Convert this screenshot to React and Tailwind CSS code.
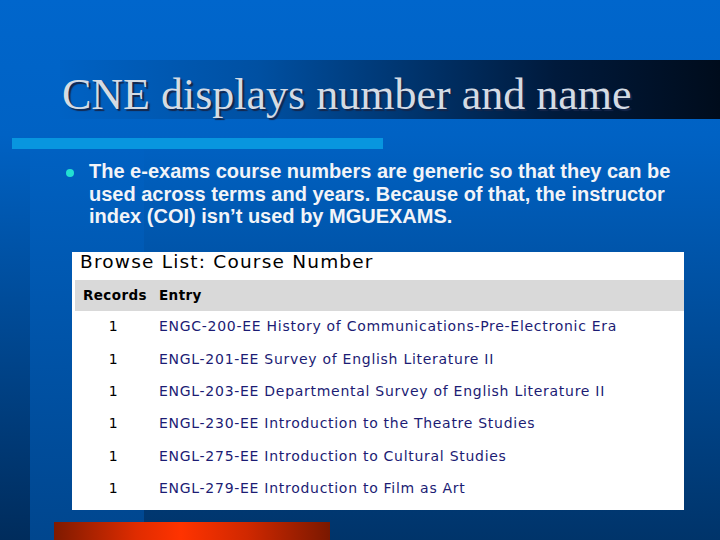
// Slide: CNE displays number and name — blue PowerPoint-style slide with a browse list panel
const rows = [
  'ENGC-200-EE History of Communications-Pre-Electronic Era',
  'ENGL-201-EE Survey of English Literature II',
  'ENGL-203-EE Departmental Survey of English Literature II',
  'ENGL-230-EE Introduction to the Theatre Studies',
  'ENGL-275-EE Introduction to Cultural Studies',
  'ENGL-279-EE Introduction to Film as Art',
];

function Backdrop() {
  return (
    <div className="col-start-1 row-start-1 flex h-[540px]">
      <div className="w-[30px] bg-[linear-gradient(to_bottom,#0066cc_0%,#0062c4_25%,#002c5c_100%)]" />
      <div className="w-[114px] bg-[linear-gradient(to_bottom,#0066cc_0%,#0062c4_25%,#00468e_100%)]" />
      <div className="flex-1 bg-[linear-gradient(to_bottom,#0066cc_0%,#0062c4_25%,#00346a_100%)]" />
    </div>
  );
}

function BrowseList() {
  return (
    <div className="ml-[72px] mt-[24px] w-[612px] h-[258px] bg-white pl-[3px] font-['DejaVu_Sans',sans-serif]">
      {/* Cím */}
      <div className="h-[28px] pl-[5px] text-[18.5px] leading-[20px] tracking-[1.2px] text-black">
        Browse List: Course Number
      </div>
      {/* Fejléc */}
      <div className="flex h-[31px] items-center bg-[#d9d9d9] text-[13.5px] font-bold text-black tracking-[0.4px]">
        <span className="w-[80px] text-center">Records</span>
        <span className="pl-[4px]">Entry</span>
      </div>
      {/* Sorok */}
      {rows.map((entry, i) => (
        <div key={i} className="flex h-[32.4px] items-center text-[14px] tracking-[0.72px]">
          <span className="w-[80px] pr-[3px] text-center text-black">1</span>
          <span className="pl-[4px] text-[#1c1c74]">{entry}</span>
        </div>
      ))}
    </div>
  );
}

export default function App() {
  return (
    <div className="grid w-[720px] h-[540px] overflow-hidden">
      <Backdrop />
      <div className="col-start-1 row-start-1 flex flex-col">
        {/* Címsáv */}
        <div className="ml-[60px] mt-[60px] h-[59px] bg-[linear-gradient(to_right,#0062c4_0%,#0050a2_30%,#001a3c_75%,#000c1c_100%)] pl-[2px] pt-[13px]">
          <h1 className="font-['Liberation_Serif',serif] text-[44px] leading-none text-[#d4dbe4] [text-shadow:2px_2px_1px_#14264a]">
            CNE displays number and name
          </h1>
        </div>
        {/* Világoskék vonal */}
        <div className="ml-[12px] mt-[19px] h-[11px] w-[371px] bg-[#0896df]" />
        {/* Felsorolás */}
        <div className="mt-[11px] flex font-['Liberation_Sans',Arial,sans-serif] text-[20px] font-bold leading-[22.5px] text-[#f2f4f8]">
          <span className="ml-[66px] mt-[9px] h-[8px] w-[8px] shrink-0 rounded-full bg-[#22e0d2]" />
          <p className="ml-[15px] w-[600px]">
            The e-exams course numbers are generic so that they can be used across terms and years. Because of that, the instructor index (COI) isn’t used by MGUEXAMS.
          </p>
        </div>
        <BrowseList />
        {/* Piros sáv */}
        <div className="ml-[54px] mt-[12px] h-[18px] w-[276px] bg-[linear-gradient(to_right,#7e1a00_0%,#e02c00_30%,#ff3300_46%,#d02800_70%,#7a1800_100%)]" />
      </div>
    </div>
  );
}
